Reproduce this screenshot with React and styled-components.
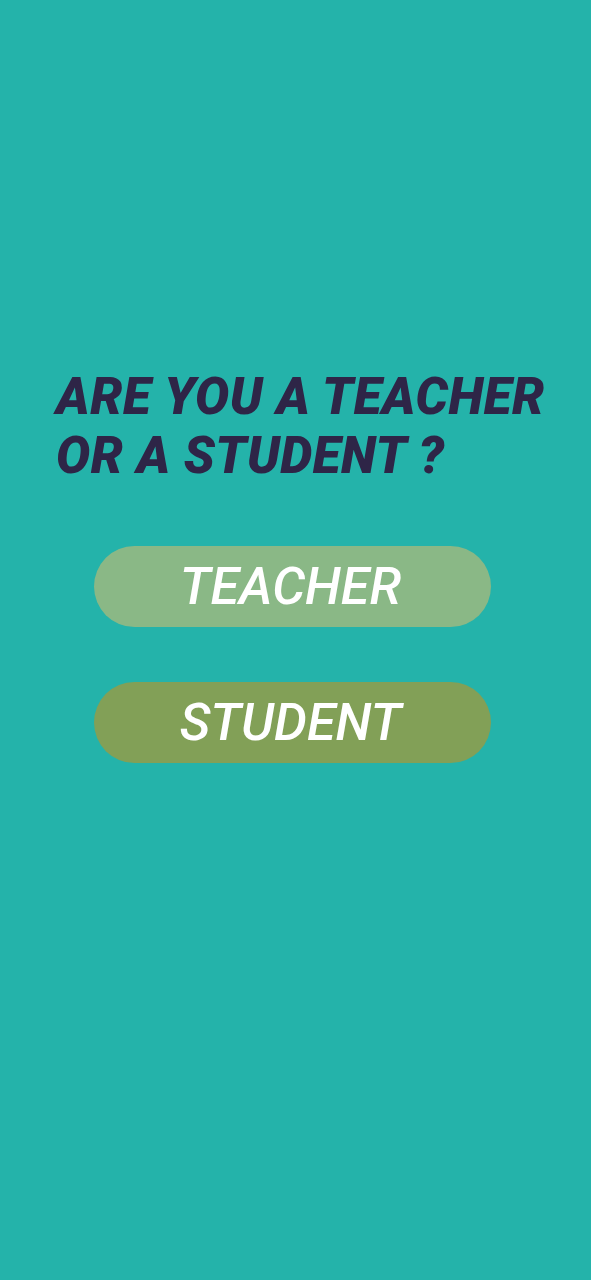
import React from "react";
import styled, { createGlobalStyle } from "styled-components";

const GlobalStyle = createGlobalStyle`
  html, body {
    margin: 0;
    padding: 0;
    background: #24b3aa;
  }
  body {
    font-family: Roboto, "Liberation Sans", sans-serif;
  }
`;

const Screen = styled.div`
  min-height: 1280px;
  background: #24b3aa;
  display: flex;
  flex-direction: column;
  align-items: center;
  padding-top: 367px;
  box-sizing: border-box;
`;

const Question = styled.h1`
  align-self: flex-start;
  margin: 0 0 0 56px;
  font-size: 51px;
  line-height: 59px;
  font-weight: 900;
  font-style: italic;
  letter-spacing: 0.5px;
  color: #2e2547;
`;

const Choices = styled.div`
  display: flex;
  flex-direction: column;
  gap: 55px;
  margin: 61px 6px 0 0;
`;

const Choice = styled.button`
  width: 397px;
  height: 81px;
  border: none;
  border-radius: 41px;
  background: ${(p) => p.bg};
  color: #ffffff;
  font-family: Roboto, "Liberation Sans", sans-serif;
  font-size: 52px;
  font-weight: 500;
  font-style: italic;
  cursor: pointer;
  padding: 0 4px 0 0;
`;

export default function App() {
  return (
    <>
      <GlobalStyle />
      <Screen>
        <Question>
          ARE YOU A TEACHER
          <br />
          OR A STUDENT ?
        </Question>
        <Choices>
          <Choice bg="#8ab886">TEACHER</Choice>
          <Choice bg="#82a057">STUDENT</Choice>
        </Choices>
      </Screen>
    </>
  );
}
